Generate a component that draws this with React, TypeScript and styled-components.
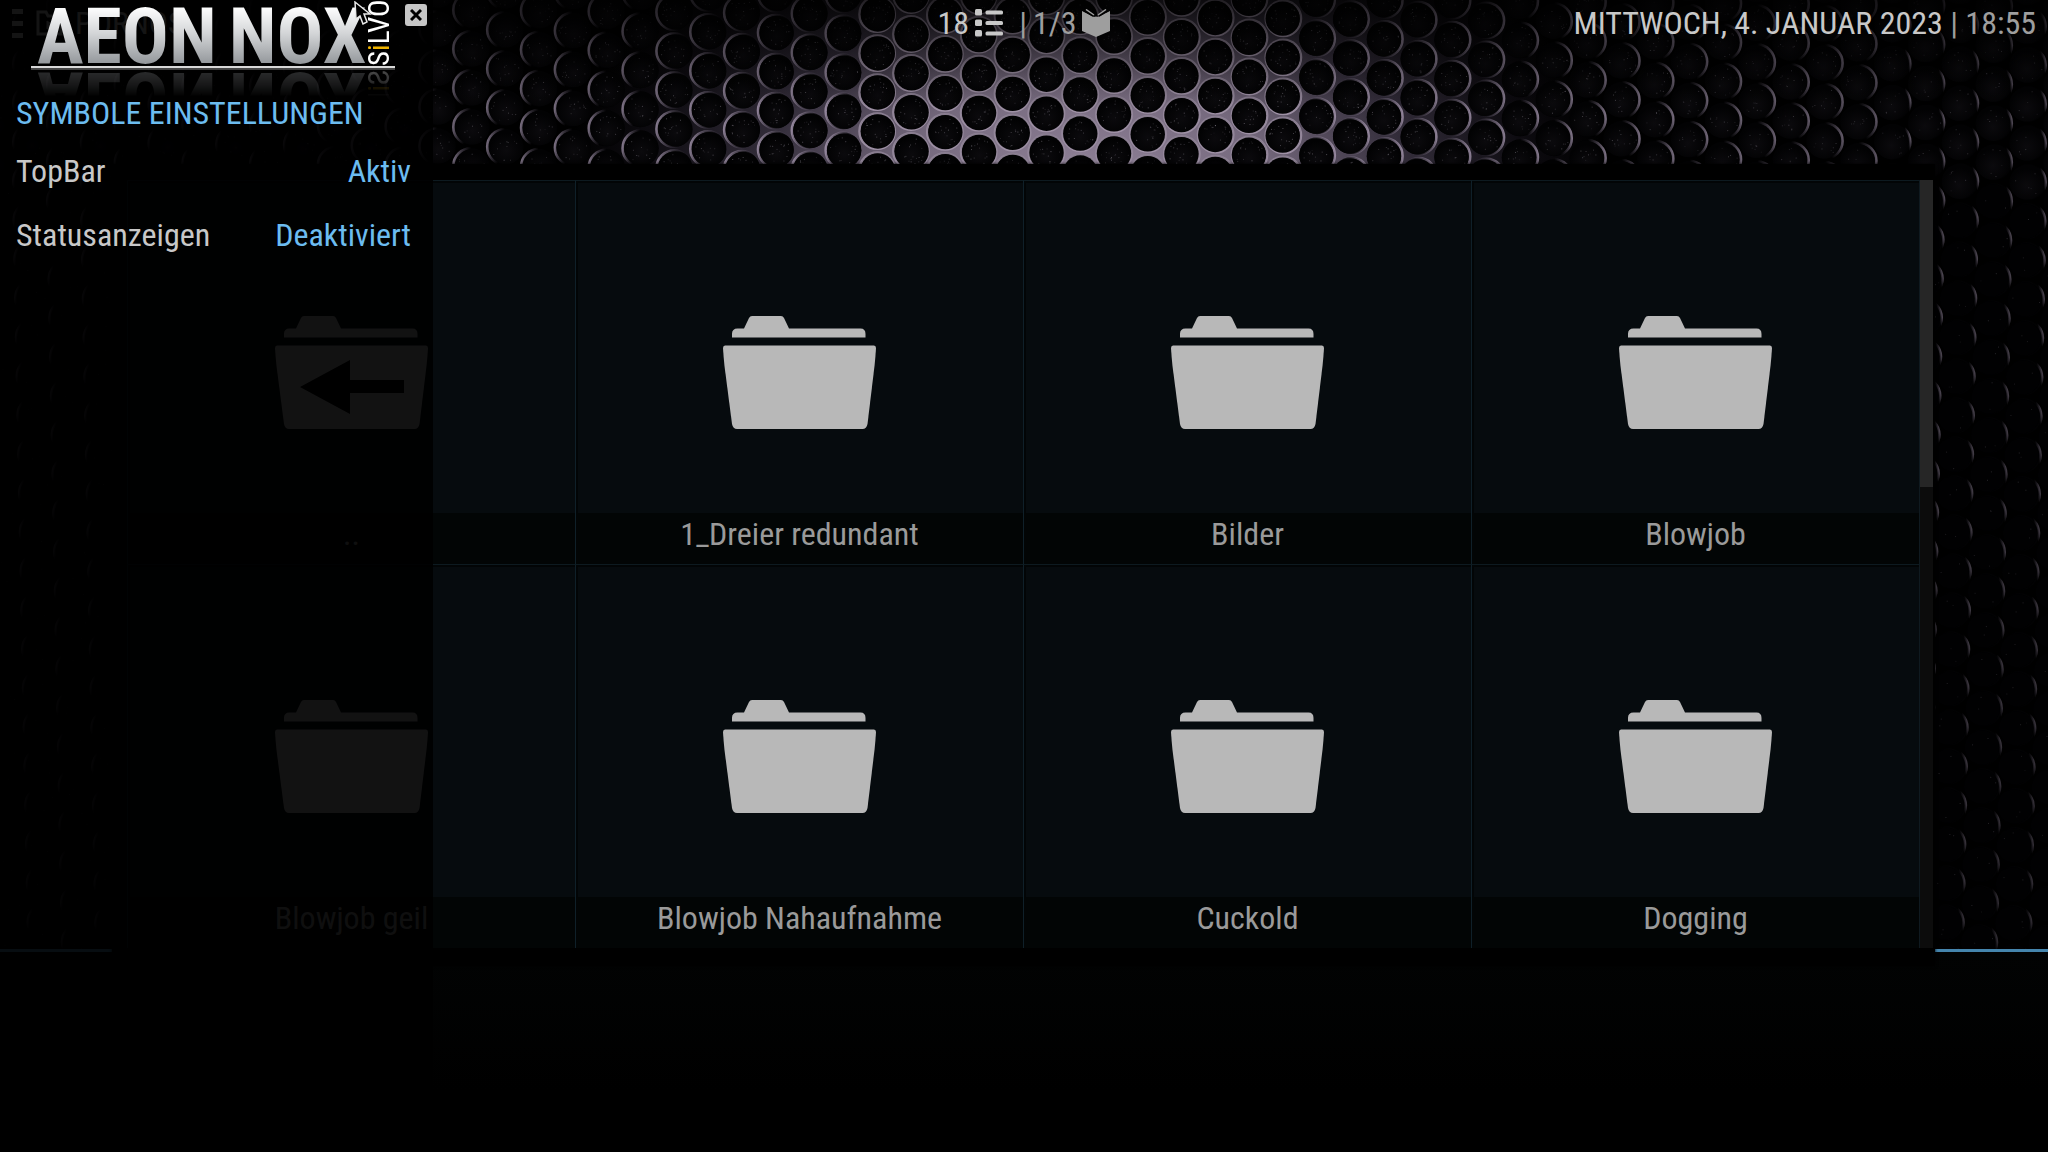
import React from 'react';
import styled, { createGlobalStyle } from 'styled-components';

const GlobalStyle = createGlobalStyle`
  *, *::before, *::after { box-sizing: border-box; }
  html, body { margin: 0; background: #000; }
  body, button { font-family: "Roboto Condensed", Roboto, "Liberation Sans", sans-serif; }
  button { border: 0; padding: 0; margin: 0; background: none; color: inherit; font-size: inherit; cursor: pointer; }
`;

const Screen = styled.div`
  position: relative;
  display: flex;
  flex-direction: column;
  min-height: 100vh;
  overflow: hidden;
  background: #000;
  color: #c8c8c8;
  font-size: 32px;
`;

const Wallpaper = styled.svg`
  position: absolute;
  inset: 0;
  width: 100%;
  height: 100%;
`;

const TopBar = styled.header`
  position: relative;
  display: grid;
  grid-template-columns: 1fr auto 1fr;
  align-items: start;
  height: 164px;
  padding: 0 12px;
  line-height: 46px;
  background: linear-gradient(rgba(0, 0, 0, 0.75), rgba(0, 0, 0, 0.45) 40px, rgba(0, 0, 0, 0) 110px);
`;

const Section = styled.div`
  display: flex;
  align-items: center;
  gap: 12px;
  height: 46px;
`;

const Counter = styled.div`
  display: flex;
  align-items: center;
  gap: 6px;
  height: 46px;
`;

const Clock = styled.div`
  justify-self: end;
  white-space: nowrap;
`;

const Muted = styled.span`
  color: #9e9e9e;
`;

const PageCount = styled(Muted)`
  display: flex;
  align-items: center;
  gap: 6px;
  padding-left: 10px;
`;

const Frame = styled.main`
  position: relative;
  z-index: 1;
  display: flex;
  margin: 0 113px -17px 112px;
  padding: 16px 2px 18px 15px;
  background: #000;
  box-shadow: 0 0 3px #000;
`;

const Grid = styled.div`
  flex: 1;
  display: grid;
  grid-template-columns: repeat(4, 1fr);
  background: #060b0e;
`;

const Cell = styled.button`
  display: flex;
  flex-direction: column;
  height: 384px;
  border-top: 1px solid #0d1a20;
  border-left: 1px solid #0f2029;
  box-shadow: inset 2px 2px 0 #020506;
  color: #9a9a9a;
`;

const Art = styled.span`
  flex: 1;
  width: 100%;
  display: flex;
  justify-content: center;
  padding-top: 135px;
`;

const Caption = styled.span`
  width: 100%;
  height: 51px;
  line-height: 42px;
  text-align: center;
  white-space: nowrap;
  background: #020505;
`;

const ScrollTrack = styled.div`
  width: 14px;
  border-left: 1px solid #0f1a20;
  background: #0c0c0c;
`;

const ScrollThumb = styled.div`
  height: 40%;
  background: #262626;
`;

const InfoPanel = styled.footer`
  position: relative;
  flex: 1;
  min-height: 202px;
  border-top: 3px solid #4585ad;
  background: linear-gradient(#020303, #000 70%);
`;

const Sidebar = styled.aside`
  position: absolute;
  z-index: 2;
  top: 0;
  bottom: 0;
  left: 0;
  width: 433px;
  background: rgba(0, 0, 0, 0.9);
`;

const SidebarHead = styled.div`
  display: flex;
  align-items: flex-start;
  gap: 10px;
  height: 91px;
  padding-left: 31px;
`;

const Logo = styled.div`
  display: flex;
  align-items: flex-start;
  flex: none;
  width: 364px;
  height: 68px;
  padding: 0 4px 0 6px;
  border-bottom: 2px solid #d8d8d8;
  -webkit-box-reflect: below 0 linear-gradient(transparent 58%, rgba(0, 0, 0, 0.32));
`;

const LogoWord = styled.span`
  height: 66px;
  margin-right: 12px;
  font-size: 78px;
  font-weight: 700;
  line-height: 74px;
  background: linear-gradient(#ffffff 10%, #d4d6d8 50%, #8f9397 100%);
  background-clip: text;
  -webkit-background-clip: text;
  color: transparent;

  & + & {
    margin-right: 0;
  }
`;

const LogoSuffix = styled.span`
  margin-left: auto;
  writing-mode: vertical-rl;
  transform: rotate(180deg);
  font-size: 29px;
  line-height: 24px;
  height: 66px;
  color: #fff;
`;

const Accent = styled.span`
  color: #f0b400;
`;

const CloseButton = styled.button`
  display: grid;
  place-items: center;
  flex: none;
  width: 22px;
  height: 22px;
  margin-top: 4px;
  border-radius: 3px;
  background: #c6c6c6;
`;

const Pointer = styled.svg`
  position: absolute;
  top: 1px;
  left: 354px;
`;

const Title = styled.h1`
  margin: 0 0 4px;
  padding-left: 16px;
  font-size: 32px;
  font-weight: 400;
  line-height: 44px;
  color: #6cbcf0;
`;

const Setting = styled.button`
  display: flex;
  justify-content: space-between;
  align-items: center;
  width: 100%;
  height: 64px;
  padding: 0 22px 0 16px;
  color: #c8c8c8;
`;

const SettingValue = styled.span`
  color: #6cbcf0;
`;

const clamp = (v: number) => Math.max(0, Math.min(1, v));

function random(seed: number) {
  const s = Math.sin(seed * 127.1) * 43758.5453;
  return s - Math.floor(s);
}

type Hole = {
  x: number;
  y: number;
  dx: number;
  rim: string;
  light: number;
  key: number;
  specks: number;
  low: boolean;
};

function buildHoles(): Hole[] {
  const holes: Hole[] = [];
  for (let n = -28; n <= 35; n++) {
    for (let k = -3; k <= 22; k++) {
      const y = 73 + n * 0.35 + k * 39 + (n % 2 ? 19.5 : 0);
      const x = 911 + n * 33.85 - Math.max(0, y - 200) * 0.02 * (n > 0 ? 1 : -1);
      const low = y > 190;
      if (low && x > 150 && x < 1915) continue;
      const offset = x - 1085;
      const dist = Math.abs(offset);
      const side = offset < 0 ? 'left' : 'right';
      const reach = dist < 230 ? 'full' : dist < 430 ? 'wide' : low || dist > 780 ? 'short' : 'half';
      holes.push({
        x,
        y,
        dx: Math.max(-1.4, Math.min(1.4, -offset / 300)),
        rim: reach === 'full' ? 'rim-full' : `rim-${side}-${reach}`,
        light: 0.95 - clamp((dist - 250) / 650) * 0.45 - (low ? 0.2 * (y / 900) : 0),
        key: n * 100 + k,
        specks: low ? 2 : Math.round(16 * clamp(1.2 - dist / 900)) + 3,
        low,
      });
    }
  }
  return holes;
}

const holes = buildHoles();

const rimStops = [
  { name: 'wide', end: 0.75 },
  { name: 'half', end: 0.4 },
  { name: 'short', end: 0.1 },
];

function Mesh() {
  return (
    <Wallpaper viewBox="0 0 2048 1152" preserveAspectRatio="xMidYMin slice" aria-hidden="true">
      <defs>
        <radialGradient id="web" gradientUnits="userSpaceOnUse" cx="0" cy="0" r="1" gradientTransform="translate(1085 190) scale(520 330)">
          <stop offset="0" stopColor="#93849b" />
          <stop offset="0.35" stopColor="#75697d" />
          <stop offset="0.62" stopColor="#332d3a" />
          <stop offset="0.85" stopColor="#0d0b10" />
          <stop offset="1" stopColor="#000" />
        </radialGradient>
        <radialGradient id="pit" cx="0.5" cy="0.6" r="0.5">
          <stop offset="0" stopColor="#0b0a0d" />
          <stop offset="1" stopColor="#020203" />
        </radialGradient>
        <linearGradient id="rim-full" x1="0" y1="1" x2="0" y2="0">
          <stop offset="0" stopColor="#a294a9" />
          <stop offset="1" stopColor="#8d8194" />
        </linearGradient>
        {rimStops.map((s) => (
          <React.Fragment key={s.name}>
            <linearGradient id={`rim-left-${s.name}`} x1="0" y1="0.4" x2="1" y2="0.6">
              <stop offset="0" stopColor="#9a8ca3" />
              <stop offset={s.end} stopColor="#5d5466" stopOpacity="0" />
            </linearGradient>
            <linearGradient id={`rim-right-${s.name}`} x1="1" y1="0.4" x2="0" y2="0.6">
              <stop offset="0" stopColor="#9a8ca3" />
              <stop offset={s.end} stopColor="#5d5466" stopOpacity="0" />
            </linearGradient>
          </React.Fragment>
        ))}
      </defs>
      <rect width="2048" height="400" fill="url(#web)" />
      {holes.map((h) => (
        <g key={h.key}>
          <circle cx={h.x} cy={h.y} r="18" fill="#020203" />
          <circle cx={h.x} cy={h.y} r="17.6" fill="none" stroke={`url(#${h.rim})`} strokeWidth="2.6" opacity={h.light} />
          <circle cx={h.x + h.dx} cy={h.y + 0.3} r="17.2" fill={h.low ? '#010102' : 'url(#pit)'} />
          {Array.from({ length: h.specks }, (_, i) => {
            const a = random(h.key + i * 3.3) * 6.28;
            const d = Math.sqrt(random(h.key * 2 + i * 7.7)) * 14;
            return (
              <rect
                key={i}
                x={h.x + Math.cos(a) * d}
                y={h.y + Math.sin(a) * d}
                width="1"
                height="1"
                fill="#b5aebb"
                opacity={0.1 + random(h.key + i) * 0.35 * h.light}
              />
            );
          })}
        </g>
      ))}
    </Wallpaper>
  );
}

function FolderIcon({ back = false }: { back?: boolean }) {
  return (
    <svg width="153" height="114" viewBox="0 0 153 114" aria-hidden="true">
      <path fill="#b8b8b8" d="M9 21.5V18q0-5.500 5.500-5.500H21L26 2q1-2 3-2H58q2 0 3 2l5 10.500h71.500q5 0 5 5.500v3.500z" />
      <path fill="#b8b8b8" d="M2 29.500H151q2 0 2 2.500-.5 9-1.500 18L144.500 108q-1 5-5 5H14q-4 0-5-5L1.500 50Q.5 41 0 32q0-2.500 2-2.500z" />
      {back && <path fill="#000" d="M25 71 75 44V64H129V77H75V98z" />}
    </svg>
  );
}

function ListIcon() {
  return (
    <svg width="28" height="28" viewBox="0 0 28 28" fill="#c8c8c8" aria-hidden="true">
      {[0, 10.5, 21].map((y) => (
        <g key={y}>
          <rect x="0" y={y} width="7" height="6.5" rx="1.5" />
          <rect x="10.5" y={y + 1.5} width="17.5" height="4" rx="1.5" />
        </g>
      ))}
    </svg>
  );
}

function BookIcon() {
  return (
    <svg width="28" height="28" viewBox="0 0 28 28" aria-hidden="true">
      <path fill="#9e9e9e" d="M0 2 12 8q2-1 4 0L28 2V22L14 28 0 22z" />
      <path fill="none" stroke="#000" strokeWidth="1.500" d="M2 1.500 11 7M26 1.500 17 7" />
      <path fill="none" stroke="#9e9e9e" strokeWidth="1.500" d="M4 .5 12 6M24 .5 16 6" />
    </svg>
  );
}

function MenuIcon() {
  return (
    <svg width="12" height="32" viewBox="0 0 12 32" fill="#c8c8c8" aria-hidden="true">
      <path d="M0 2H11V7H0zM0 14H11V19H0zM0 26H11V31H0z" />
    </svg>
  );
}

function MediaFolderIcon() {
  return (
    <svg width="27" height="26" viewBox="0 0 27 26" fill="none" stroke="#c8c8c8" strokeWidth="3" aria-hidden="true">
      <path d="M2 24V2H10L12 6H25V24z" />
      <path d="M11 11 17 15 11 19z" fill="#c8c8c8" strokeWidth="1" />
    </svg>
  );
}

const folders = [
  '..',
  '1_Dreier redundant',
  'Bilder',
  'Blowjob',
  'Blowjob geil',
  'Blowjob Nahaufnahme',
  'Cuckold',
  'Dogging',
];

const settings = [
  { label: 'TopBar', value: 'Aktiv' },
  { label: 'Statusanzeigen', value: 'Deaktiviert' },
];

export default function App() {
  return (
    <Screen>
      <GlobalStyle />
      <Mesh />
      <TopBar>
        <Section>
          <MenuIcon />
          <MediaFolderIcon />
          <span>PORNOS</span>
        </Section>
        <Counter>
          <span>18</span>
          <ListIcon />
          <PageCount>
            <span>|</span>
            <span>1/3</span>
          </PageCount>
          <BookIcon />
        </Counter>
        <Clock>
          MITTWOCH, 4. JANUAR 2023 <Muted>| 18:55</Muted>
        </Clock>
      </TopBar>
      <Frame>
        <Grid>
          {folders.map((name) => (
            <Cell key={name} type="button">
              <Art>
                <FolderIcon back={name === '..'} />
              </Art>
              <Caption>{name}</Caption>
            </Cell>
          ))}
        </Grid>
        <ScrollTrack>
          <ScrollThumb />
        </ScrollTrack>
      </Frame>
      <InfoPanel />
      <Sidebar>
        <SidebarHead>
          <Logo>
            <LogoWord>AEON</LogoWord>
            <LogoWord>NOX</LogoWord>
            <LogoSuffix>
              S<Accent>i</Accent>LVO
            </LogoSuffix>
          </Logo>
          <CloseButton type="button" aria-label="Schließen">
            <svg width="12" height="12" viewBox="0 0 12 12" stroke="#000" strokeWidth="3" aria-hidden="true">
              <path d="M1 1 11 11M11 1 1 11" />
            </svg>
          </CloseButton>
        </SidebarHead>
        <Title>SYMBOLE EINSTELLUNGEN</Title>
        {settings.map((item) => (
          <Setting key={item.label} type="button">
            <span>{item.label}</span>
            <SettingValue>{item.value}</SettingValue>
          </Setting>
        ))}
        <Pointer width="18" height="24" viewBox="0 0 18 24" aria-hidden="true">
          <path d="M1 1 16 13H10L13 21 9 23 6 15 2 18z" fill="#000" stroke="#e8e8e8" strokeWidth="1.500" />
        </Pointer>
      </Sidebar>
    </Screen>
  );
}
